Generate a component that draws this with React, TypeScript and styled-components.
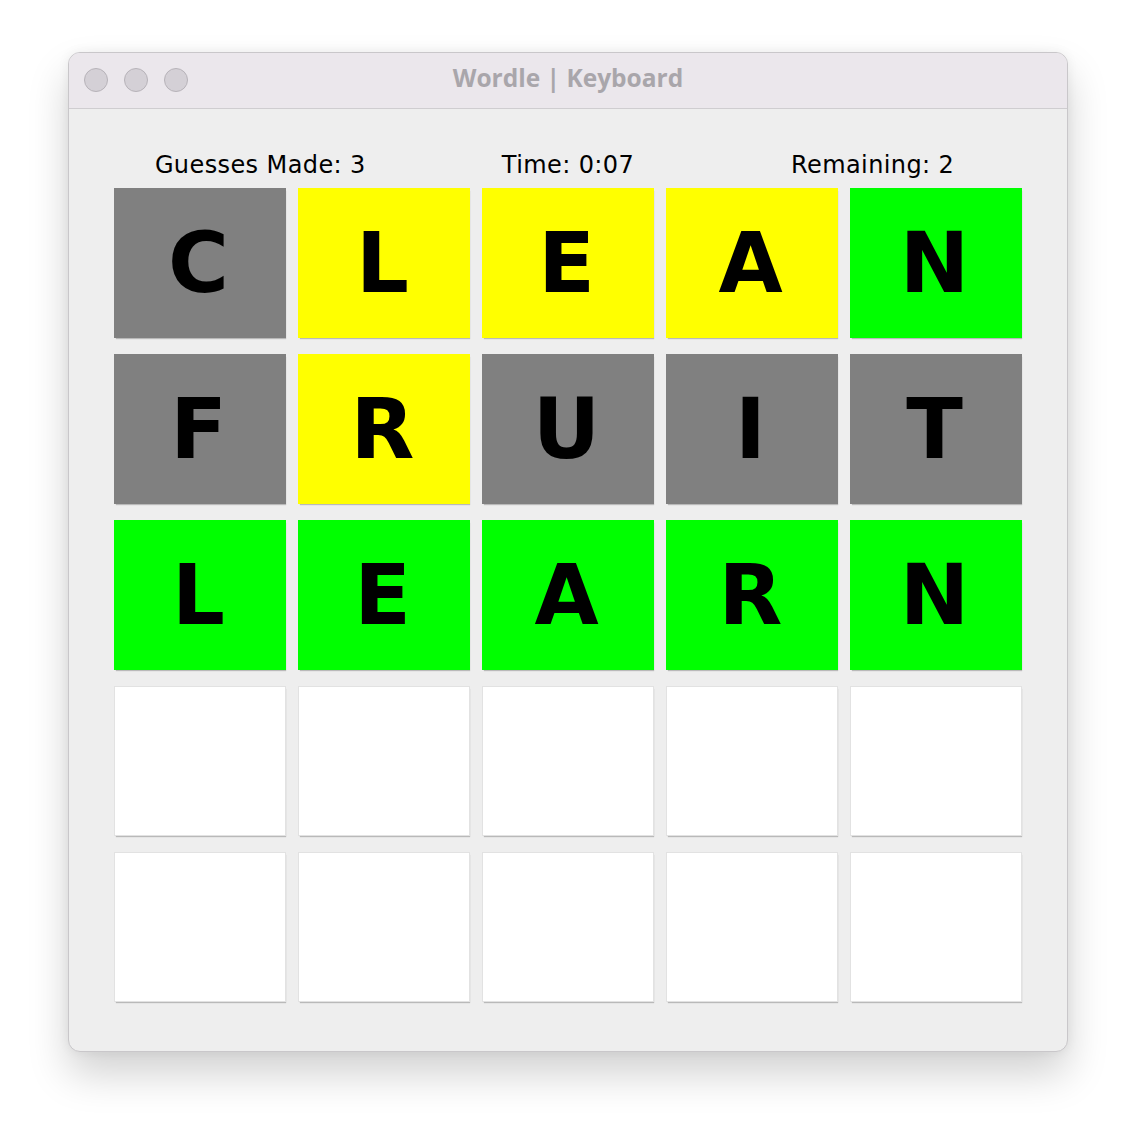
import React from "react";
import styled, { createGlobalStyle } from "styled-components";

const Global = createGlobalStyle`
  html, body { margin: 0; padding: 0; background: #ffffff; }
  body { font-family: "DejaVu Sans", "Liberation Sans", sans-serif; }
`;

const Page = styled.div`
  padding: 52px 0 0 68px;
  width: 1136px;
  height: 1136px;
  box-sizing: border-box;
`;

const Window = styled.div`
  width: 1000px;
  height: 1000px;
  box-sizing: border-box;
  border-radius: 12px;
  background: #eeeeee;
  border: 1px solid #c9c7ca;
  box-shadow: 0 22px 40px rgba(0, 0, 0, 0.18), 0 0 12px rgba(0, 0, 0, 0.06);
  overflow: hidden;
  display: flex;
  flex-direction: column;
`;

const TitleBar = styled.div`
  height: 56px;
  flex: none;
  background: #ebe7ec;
  border-bottom: 1px solid #cfcdd0;
  display: flex;
  align-items: center;
  position: relative;
  box-sizing: border-box;
`;

const Lights = styled.div`
  display: flex;
  gap: 16px;
  padding-left: 15px;
  margin-top: -2px;
`;

const Light = styled.span`
  width: 22px;
  height: 22px;
  border-radius: 50%;
  background: #d4d0d6;
  border: 1px solid #b7b3b9;
`;

const Title = styled.div`
  position: absolute;
  left: 0;
  right: 0;
  top: 0;
  bottom: 6px;
  display: flex;
  align-items: center;
  justify-content: center;
  font-family: "Open Sans", "DejaVu Sans", sans-serif;
  font-weight: 700;
  font-size: 24.5px;
  color: #a9a6ab;
  pointer-events: none;
`;

const Content = styled.div`
  padding: 40px 45px 0 45px;
  display: flex;
  flex-direction: column;
`;

const Stats = styled.div`
  display: grid;
  grid-template-columns: 1fr 1fr 1fr;
  height: 39px;
  align-items: start;
`;

const Stat = styled.div<{ $shift?: number }>`
  text-align: center;
  font-family: "DejaVu Sans", sans-serif;
  font-size: 24px;
  color: #000;
  line-height: 32px;
  transform: translateX(${(p) => p.$shift ?? 0}px);
  letter-spacing: 0.4px;
`;

const Grid = styled.div`
  display: grid;
  grid-template-columns: repeat(5, 172px);
  grid-auto-rows: 150px;
  column-gap: 12px;
  row-gap: 16px;
`;

type State = "absent" | "present" | "correct" | "empty";

const colors: Record<State, string> = {
  absent: "#808080",
  present: "#ffff00",
  correct: "#00ff00",
  empty: "#ffffff",
};

const Tile = styled.div<{ $state: State }>`
  background: ${(p) => colors[p.$state]};
  box-sizing: border-box;
  border: ${(p) => (p.$state === "empty" ? "1px solid #e2e2e2" : "none")};
  box-shadow: 1px 2px 1px -1px rgba(0, 0, 0, 0.22);
  display: flex;
  align-items: center;
  justify-content: center;
  font-family: "DejaVu Sans", sans-serif;
  font-weight: 700;
  font-size: 83px;
  color: #000;
  line-height: 1;
  padding-right: 3px;
`;

const rows: { word: string; states: State[] }[] = [
  { word: "CLEAN", states: ["absent", "present", "present", "present", "correct"] },
  { word: "FRUIT", states: ["absent", "present", "absent", "absent", "absent"] },
  { word: "LEARN", states: ["correct", "correct", "correct", "correct", "correct"] },
  { word: "     ", states: ["empty", "empty", "empty", "empty", "empty"] },
  { word: "     ", states: ["empty", "empty", "empty", "empty", "empty"] },
];

export default function App() {
  return (
    <Page>
      <Global />
      <Window>
        <TitleBar>
          <Lights>
            <Light />
            <Light />
            <Light />
          </Lights>
          <Title>Wordle | Keyboard</Title>
        </TitleBar>
        <Content>
          <Stats>
            <Stat $shift={-5}>Guesses Made: 3</Stat>
            <Stat>Time: 0:07</Stat>
            <Stat $shift={2}>Remaining: 2</Stat>
          </Stats>
          <Grid>
            {rows.map((r, ri) =>
              r.states.map((s, ci) => (
                <Tile key={`${ri}-${ci}`} $state={s}>
                  {r.word[ci].trim()}
                </Tile>
              ))
            )}
          </Grid>
        </Content>
      </Window>
    </Page>
  );
}
